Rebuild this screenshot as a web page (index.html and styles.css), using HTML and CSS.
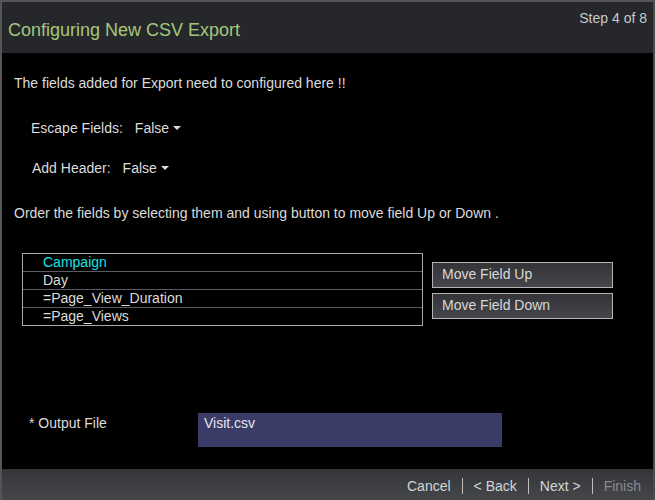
FILE: index.html
```html
<!DOCTYPE html>
<html>
<head>
<meta charset="utf-8">
<link rel="stylesheet" href="styles.css">
</head>
<body>
<div class="wizard">
  <div class="header">
    <div class="title">Configuring New CSV Export</div>
    <div class="step">Step 4 of 8</div>
  </div>
  <div class="content">
    <p class="intro">The fields added for Export need to configured here !!</p>
    <div class="opt opt-escape"><span class="lbl">Escape Fields:</span><span class="dd">False<span class="caret"></span></span></div>
    <div class="opt opt-header"><span class="lbl">Add Header:</span><span class="dd">False<span class="caret"></span></span></div>
    <p class="order">Order the fields by selecting them and using button to move field Up or Down .</p>
    <div class="fields">
      <ul class="list">
        <li class="sel">Campaign</li>
        <li>Day</li>
        <li>=Page_View_Duration</li>
        <li>=Page_Views</li>
      </ul>
      <div class="btns">
        <button class="mv">Move Field Up</button>
        <button class="mv">Move Field Down</button>
      </div>
    </div>
    <div class="output">
      <span class="olbl">* Output File</span>
      <div class="ofile">Visit.csv</div>
    </div>
  </div>
  <div class="footer">
    <span class="fb">Cancel</span><span class="sep"></span>
    <span class="fb">&lt; Back</span><span class="sep"></span>
    <span class="fb">Next &gt;</span><span class="sep"></span>
    <span class="fb dis">Finish</span>
  </div>
</div>
</body>
</html>
```
FILE: styles.css
```css
* { box-sizing: border-box; }
html, body { margin: 0; padding: 0; background: #000; }
body { font-family: "Liberation Sans", Arial, sans-serif; color: #dcdcdc; }
.wizard {
  width: 655px; height: 500px;
  border: 2px solid #555;
  border-right-color: #4c4c4c;
  border-bottom: 0;
  display: flex; flex-direction: column;
  background: #000;
}
.header {
  height: 51px; background: #26272b;
  display: flex; justify-content: space-between; align-items: flex-start;
  padding: 0 6px 0 6px;
}
.title { color: #a3c77a; font-size: 18px; margin-top: 18px; }
.step { color: #c8c8c8; font-size: 14px; margin-top: 8px; }
.content { flex: 1; position: relative; padding: 0 0 0 12px; }
.intro { margin: 21px 0 0 0; font-size: 14px; line-height: 18px; }
.opt { font-size: 14px; line-height: 18px; display: flex; }
.opt-escape { margin: 27px 0 0 17px; }
.opt-header { margin: 22px 0 0 18px; }
.lbl { margin-right: 12px; }
.dd { display: inline-flex; align-items: center; }
.caret {
  display: inline-block; width: 0; height: 0; margin-left: 4px;
  border-left: 4px solid transparent; border-right: 4px solid transparent;
  border-top: 4px solid #dcdcdc;
}
.order { margin: 27px 0 0 0; font-size: 14px; line-height: 18px; }
.fields { display: flex; align-items: flex-start; margin: 31px 0 0 8px; }
.list {
  list-style: none; margin: 0; padding: 0;
  width: 401px; border: 1px solid #aaa;
}
.list li {
  height: 18px; line-height: 17px; font-size: 14px; padding-left: 20px;
  border-top: 1px solid #5a5a66;
}
.list li:first-child { border-top: 0; height: 17px; }
.list li.sel { color: #19e0e6; }
.btns { display: flex; flex-direction: column; gap: 5px; margin: 9px 0 0 9px; }
.mv {
  width: 181px; height: 26px; text-align: left; padding: 0 0 2px 9px;
  font-family: "Liberation Sans", Arial, sans-serif; font-size: 14px; color: #d8d8d8;
  background: linear-gradient(#333338, #45464b);
  border: 1px solid #b4b4b4; border-radius: 0;
}
.output { display: flex; align-items: flex-start; margin: 87px 0 0 15px; }
.olbl { font-size: 14px; line-height: 18px; margin-top: 1px; width: 169px; }
.ofile {
  width: 304px; height: 34px; background: #3b3b68; color: #e4e4ee;
  font-size: 14px; line-height: 18px; padding: 1px 6px;
}
.footer {
  height: 31px;
  background: linear-gradient(#343539, #46474b);
  display: flex; justify-content: flex-end; align-items: center;
  padding: 2px 12px 0 0; font-size: 14px;
}
.fb { color: #d4d4d4; }
.fb.dis { color: #8a8a8e; }
.sep { width: 1px; height: 16px; background: #bdbdbd; margin: 0 11px; }
```
